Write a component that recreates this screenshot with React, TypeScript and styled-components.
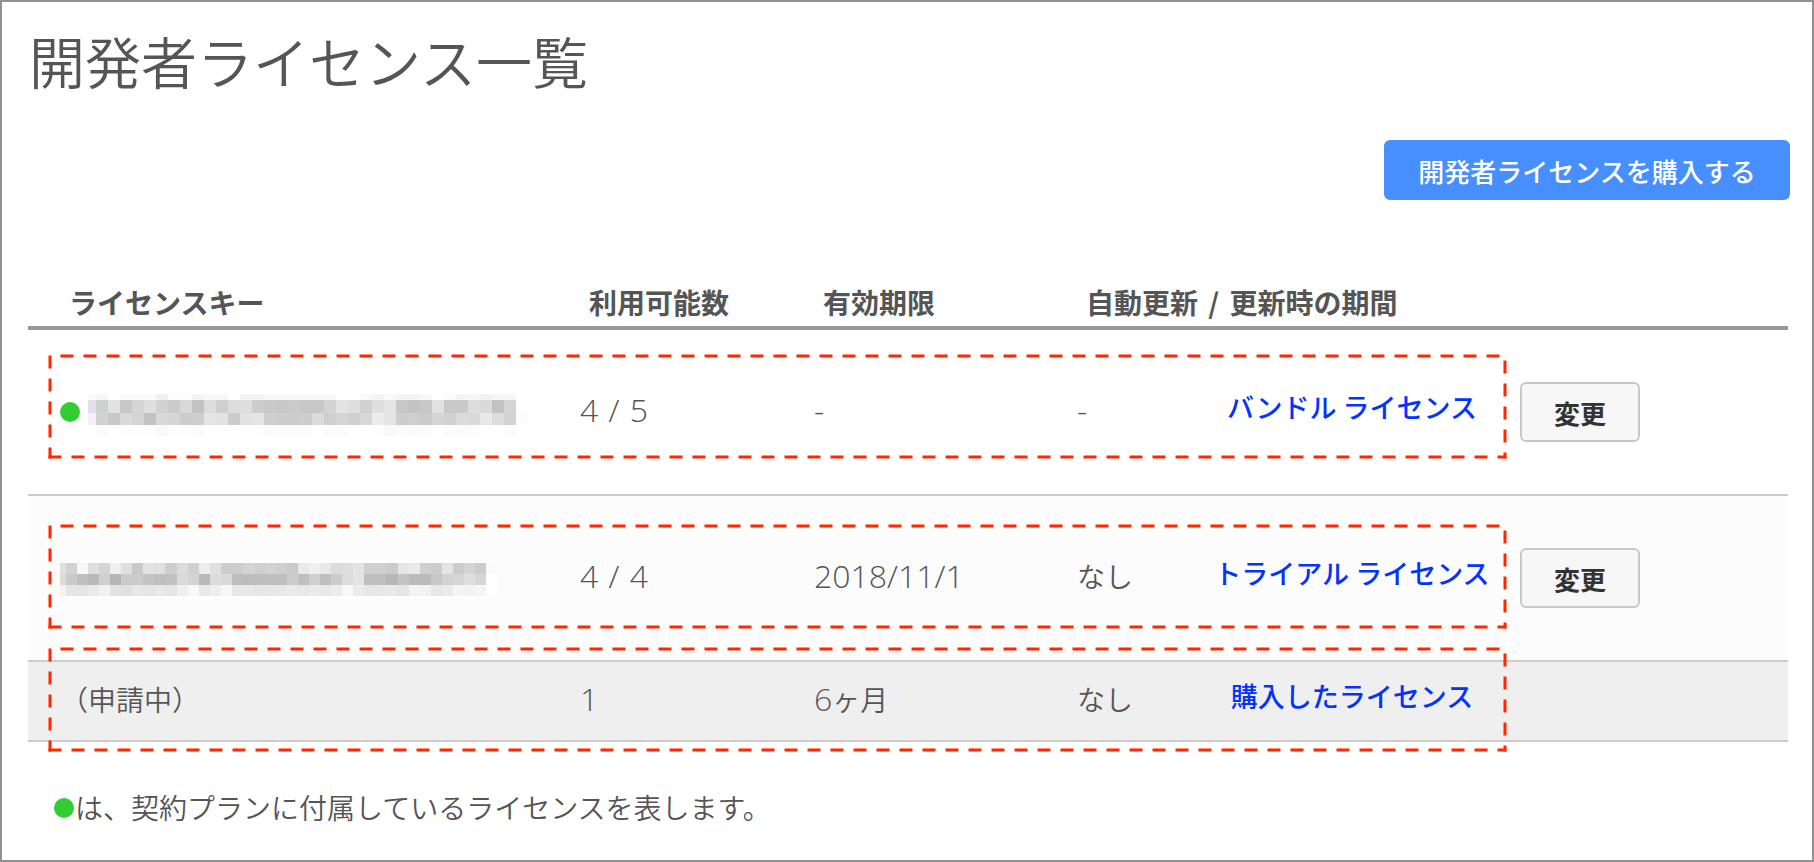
import React from "react";
import styled, { createGlobalStyle } from "styled-components";

const GlobalStyle = createGlobalStyle`
  *, *::before, *::after { box-sizing: border-box; }
  body {
    margin: 0;
    background: #fff;
    color: #555;
    font-family: "Noto Sans CJK JP", sans-serif;
    font-size: 28px;
    font-weight: 350;
    line-height: 40px;
  }
`;

const Page = styled.main`
  display: flex;
  flex-direction: column;
  min-height: 100vh;
  padding: 18px 22px 20px 26px;
  border: 2px solid #919191;
`;

const Title = styled.h1`
  margin: 0;
  padding-left: 1px;
  font-size: 56px;
  font-weight: 350;
  line-height: 80px;
`;

const Actions = styled.div`
  display: flex;
  justify-content: flex-end;
  margin: 40px 0 82px;
`;

const Button = styled.button<{ $primary?: boolean }>`
  display: block;
  height: 60px;
  width: ${(p) => (p.$primary ? "406px" : "120px")};
  padding: 2px 0 0;
  border: 2px solid ${(p) => (p.$primary ? "#478fff" : "#c8c8c8")};
  border-radius: 6px;
  background: ${(p) => (p.$primary ? "#478fff" : "#f7f7f7")};
  color: ${(p) => (p.$primary ? "#fff" : "#333")};
  font-family: inherit;
  font-size: 26px;
  font-weight: ${(p) => (p.$primary ? 500 : 700)};
  line-height: 40px;
  white-space: nowrap;
  cursor: pointer;
`;

const TableArea = styled.section`
  padding-right: 2px;
`;

const LicenseTable = styled.table`
  width: 100%;
  table-layout: fixed;
  border-collapse: separate;
  border-spacing: 0;
`;

const Column = styled.col<{ $width?: number }>`
  width: ${(p) => (p.$width ? `${p.$width}px` : "auto")};
`;

const HeadCell = styled.th`
  padding: 0 0 4px 41px;
  border-bottom: 4px solid #999;
  font-weight: 700;
  text-align: left;
  white-space: nowrap;
`;

const Row = styled.tr<{ $tone: string; $compact?: boolean }>`
  position: relative;
  height: ${(p) => (p.$compact ? "80px" : "166px")};
  background: ${(p) => p.$tone};
`;

const Cell = styled.td`
  padding: 0 0 4px 32px;
  border-bottom: 2px solid #ccc;
  vertical-align: middle;
  white-space: nowrap;
`;

const KeyCell = styled(Cell)`
  padding-bottom: 0;
`;

const KindCell = styled(Cell)`
  padding: 0 0 10px;
  color: #0433ff;
  font-size: 27px;
  font-weight: 500;
  text-align: center;
`;

const ActionCell = styled(Cell)`
  padding: 0 0 0 22px;
`;

const Figure = styled.span`
  font-family: "Open Sans", sans-serif;
  font-size: 32px;
  font-weight: 350;
`;

const Slash = styled.span`
  margin: 0 4px;
`;

const NarrowSlash = styled.span`
  margin: 0 2px;
`;

const KeyLine = styled.div`
  display: flex;
  align-items: center;
  gap: 8px;
`;

const Dot = styled.span`
  flex: none;
  display: inline-block;
  width: 20px;
  height: 20px;
  border-radius: 50%;
  background: #33cc33;
`;

const Legend = styled.p`
  display: flex;
  align-items: center;
  gap: 1px;
  margin: 46px 0 0;
  padding-left: 26px;
`;

const LegendText = styled.span`
  padding-bottom: 2px;
  line-height: 38px;
`;

const Outline = styled.svg<{ $top: number }>`
  position: absolute;
  top: ${(p) => p.$top}px;
  left: 22px;
  width: calc(100% - 305px);
  height: 101px;
  overflow: visible;
  pointer-events: none;
  stroke: #ff2600;
  stroke-width: 3px;
  stroke-linecap: square;
  stroke-dasharray: 10 13;
`;

const Mosaic = styled.svg`
  display: block;
  flex: none;
  overflow: visible;
`;

const Highlight = ({ top }: { top: number }) => (
  <Outline $top={top} aria-hidden="true">
    <line x1="0" y1="100%" x2="0" y2="0" strokeDashoffset="2" />
    <line x1="0" y1="0" x2="100%" y2="0" strokeDashoffset="11" />
    <line x1="100%" y1="0" x2="100%" y2="100%" strokeDashoffset="17" />
    <line x1="100%" y1="100%" x2="0" y2="100%" strokeDashoffset="4" />
  </Outline>
);

type Band = { y: number; h: number; shades: string };

/* Masked key: every band lists one shade per block, as a two-digit grey or a full colour. */
const MaskedKey = ({ lead, pitch, height, bands }: { lead: number; pitch: number; height: number; bands: Band[] }) => (
  <Mosaic width={430} height={height} shapeRendering="crispEdges" role="img" aria-label="ライセンスキー">
    {bands.map((band) =>
      band.shades.split(" ").map((g, i) => (
        <rect
          key={`${band.y}-${i}`}
          x={i === 0 ? 0 : Math.round(lead + (i - 1) * pitch)}
          y={band.y}
          width={i === 0 ? lead : Math.round(lead + i * pitch) - Math.round(lead + (i - 1) * pitch)}
          height={band.h}
          fill={g.length === 6 ? `#${g}` : `#${g}${g}${g}`}
        />
      ))
    )}
  </Mosaic>
);

const BUNDLE_BANDS: Band[] = [
  { y: 0, h: 6, shades: "fa f6 fe fa fa fa f0 fd fd f4 f8 f7 ff f4 f4 f7 f7 f7 f7 f7 f7 ff ff f9 f4 f9 f4 f4 f7 ff fb f4 f6 f2 f6 f6" },
  { y: 6, h: 13, shades: "e5dde8 ced1cd e2 c8 d5 df d2 cb d9 c2 dc cf dc de cd c9 c8 ca c7 c8 d3 e3 de d1 df e4 c7 c3 c8 e1 c9 c9 dd da c2 d4" },
  { y: 19, h: 12, shades: "f6eef7 d0d3ce c8 d9 d4 c3 d8 d5 cd ce e4 e2 cb e1 e5 ce cd cc cd db cf d5 d0 d7 ec e4 cd cf cb d4 d1 db da e8 dc d3 fc" },
  { y: 31, h: 11, shades: "ff fb ff fd fd fd f9 fd fd fc fe fe ff ff fd fa fc fc fc fe fc fc fe ff fd f9 fb fa fc ff fc fb fc ff fe fc" },
];

const TRIAL_BANDS: Band[] = [
  { y: 0, h: 2, shades: "fc ff ff ff ff ff ff ff ff ff ff ff ff ff ff ff ff ff ff ff ff ff ff ff ff ff ff ff ff ff ff ff ff ff ff ff ff ff ff" },
  { y: 2, h: 11, shades: "df d2 f7 de d4 ef df c9 e3 e0 cd db d1 ed e0 cd cc d3 cf d2 cf c9 e9 ef e8 dc de e4 cf cf cb e5 ea d0 cc e4 cc d4 cc fa" },
  { y: 13, h: 11, shades: "dfdad9 c8cbca c0 b9 cf b6 cb cb c3 bf c1 da d3 b9 dc da be bd be bf bf cc c0 cf bf cc dd e4 c0 bf b7 c3 bb bb c8 d3 d6 df d6 ff" },
  { y: 24, h: 11, shades: "f7f2f0 e5 e5 ea eef2f0 e2 e0 e7 e5 e8 e5 ef f8 e8 ee f7 e7 e8 e6 e7 e8 ea e8 ea e8 ec f8 e8eceb e6 e7 e8 e5 f3 f2 e7 ea f4 f2 f5 fe" },
  { y: 35, h: 2, shades: "fdf6f4 ff ff ff ff ff ff ff ff ff ff ff ff ff ff ff ff ff ff ff ff ff ff ff ff ff ff ff ff ff ff ff ff ff ff ff ff ff ff" },
];

const Seats = ({ free, total }: { free: number; total: number }) => (
  <Figure>
    {free} <NarrowSlash>/</NarrowSlash> {total}
  </Figure>
);

export default function App() {
  return (
    <>
      <GlobalStyle />
      <Page>
        <Title>開発者ライセンス一覧</Title>
        <Actions>
          <Button $primary type="button">開発者ライセンスを購入する</Button>
        </Actions>
        <TableArea>
          <LicenseTable>
            <colgroup>
              <Column />
              <Column $width={234} />
              <Column $width={263} />
              <Column $width={161} />
              <Column $width={292} />
              <Column $width={290} />
            </colgroup>
            <thead>
              <tr>
                <HeadCell scope="col">ライセンスキー</HeadCell>
                <HeadCell scope="col">利用可能数</HeadCell>
                <HeadCell scope="col">有効期限</HeadCell>
                <HeadCell scope="col" colSpan={3}>自動更新 <Slash>/</Slash> 更新時の期間</HeadCell>
              </tr>
            </thead>
            <tbody>
              <Row $tone="#fff">
                <KeyCell>
                  <KeyLine>
                    <Dot />
                    <MaskedKey lead={8} pitch={12} height={36} bands={BUNDLE_BANDS} />
                  </KeyLine>
                  <Highlight top={26} />
                </KeyCell>
                <Cell><Seats free={4} total={5} /></Cell>
                <Cell><Figure>-</Figure></Cell>
                <Cell><Figure>-</Figure></Cell>
                <KindCell>バンドル ライセンス</KindCell>
                <ActionCell><Button type="button">変更</Button></ActionCell>
              </Row>
              <Row $tone="#fcfcfc">
                <KeyCell>
                  <KeyLine>
                    <MaskedKey lead={6} pitch={11.05} height={34} bands={TRIAL_BANDS} />
                  </KeyLine>
                  <Highlight top={30} />
                </KeyCell>
                <Cell><Seats free={4} total={4} /></Cell>
                <Cell><Figure>2018/11/1</Figure></Cell>
                <Cell>なし</Cell>
                <KindCell>トライアル ライセンス</KindCell>
                <ActionCell><Button type="button">変更</Button></ActionCell>
              </Row>
              <Row $tone="#efefef" $compact>
                <Cell>
                  （申請中）
                  <Highlight top={-13} />
                </Cell>
                <Cell><Figure>1</Figure></Cell>
                <Cell><Figure>6</Figure>ヶ月</Cell>
                <Cell>なし</Cell>
                <KindCell>購入したライセンス</KindCell>
                <ActionCell />
              </Row>
            </tbody>
          </LicenseTable>
        </TableArea>
        <Legend>
          <Dot />
          <LegendText>は、契約プランに付属しているライセンスを表します。</LegendText>
        </Legend>
      </Page>
    </>
  );
}
